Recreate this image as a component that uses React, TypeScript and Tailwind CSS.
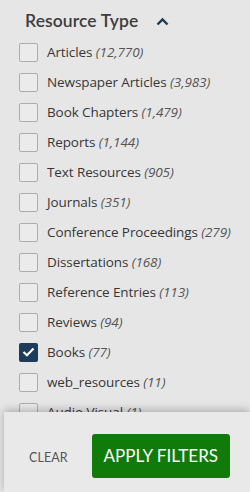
import React from "react";

const items = [
  { label: "Articles", count: "12,770" },
  { label: "Newspaper Articles", count: "3,983" },
  { label: "Book Chapters", count: "1,479" },
  { label: "Reports", count: "1,144" },
  { label: "Text Resources", count: "905" },
  { label: "Journals", count: "351" },
  { label: "Conference Proceedings", count: "279" },
  { label: "Dissertations", count: "168" },
  { label: "Reference Entries", count: "113" },
  { label: "Reviews", count: "94" },
  { label: "Books", count: "77", checked: true },
  { label: "web_resources", count: "11" },
  { label: "Audio Visual", count: "1" },
];

export default function App() {
  return (
    <div
      className="relative h-[492px] w-[250px] overflow-hidden bg-[#e6e6e6] text-[#333]"
      style={{ fontFamily: "Lato, 'Liberation Sans', sans-serif" }}
    >
      <div className="flex items-center gap-[18px] pl-[25px] pt-[8px] h-[34px]">
        <span className="text-[17.5px] font-semibold text-[#3d3d3d] tracking-[0.1px]">Resource Type</span>
        <svg width="13" height="9" viewBox="0 0 13 9" className="mt-[1px]">
          <path d="M1.5 7.5 L6.5 2.5 L11.5 7.5" fill="none" stroke="#1b3a57" strokeWidth="2.4" />
        </svg>
      </div>
      <ul
        className="mt-[3px] pl-[19px] flex flex-col"
        style={{ fontFamily: "'Open Sans', 'Liberation Sans', sans-serif" }}
      >
        {items.map((it) => (
          <li key={it.label} className="flex items-center h-[30px] gap-[9px]">
            {it.checked ? (
              <span className="flex h-[19px] w-[19px] items-center justify-center rounded-[2px] bg-[#1d3b5a]">
                <svg width="13" height="10" viewBox="0 0 13 10">
                  <path d="M1.5 5 L5 8.3 L11.5 1.5" fill="none" stroke="#fff" strokeWidth="2.2" />
                </svg>
              </span>
            ) : (
              <span className="h-[19px] w-[19px] rounded-[2px] border border-[#adadad] bg-[#ebebeb]" />
            )}
            <span className="text-[13.5px] text-[#363636] whitespace-nowrap tracking-[-0.1px]">
              {it.label}{" "}
              <span className="italic text-[#555]">({it.count})</span>
            </span>
          </li>
        ))}
      </ul>
      <div className="absolute bottom-0 left-[4px] right-0 h-[80px] bg-[#e9e9e9] shadow-[0_-2px_8px_rgba(0,0,0,0.25)] flex items-start pt-[22px]">
        <span className="ml-[25px] mt-[15px] text-[12.5px] text-[#555] tracking-[0.1px]">CLEAR</span>
        <button className="ml-[24px] h-[44px] w-[138px] rounded-[3px] bg-[#117b0a] text-white text-[17px]">
          APPLY FILTERS
        </button>
      </div>
    </div>
  );
}
